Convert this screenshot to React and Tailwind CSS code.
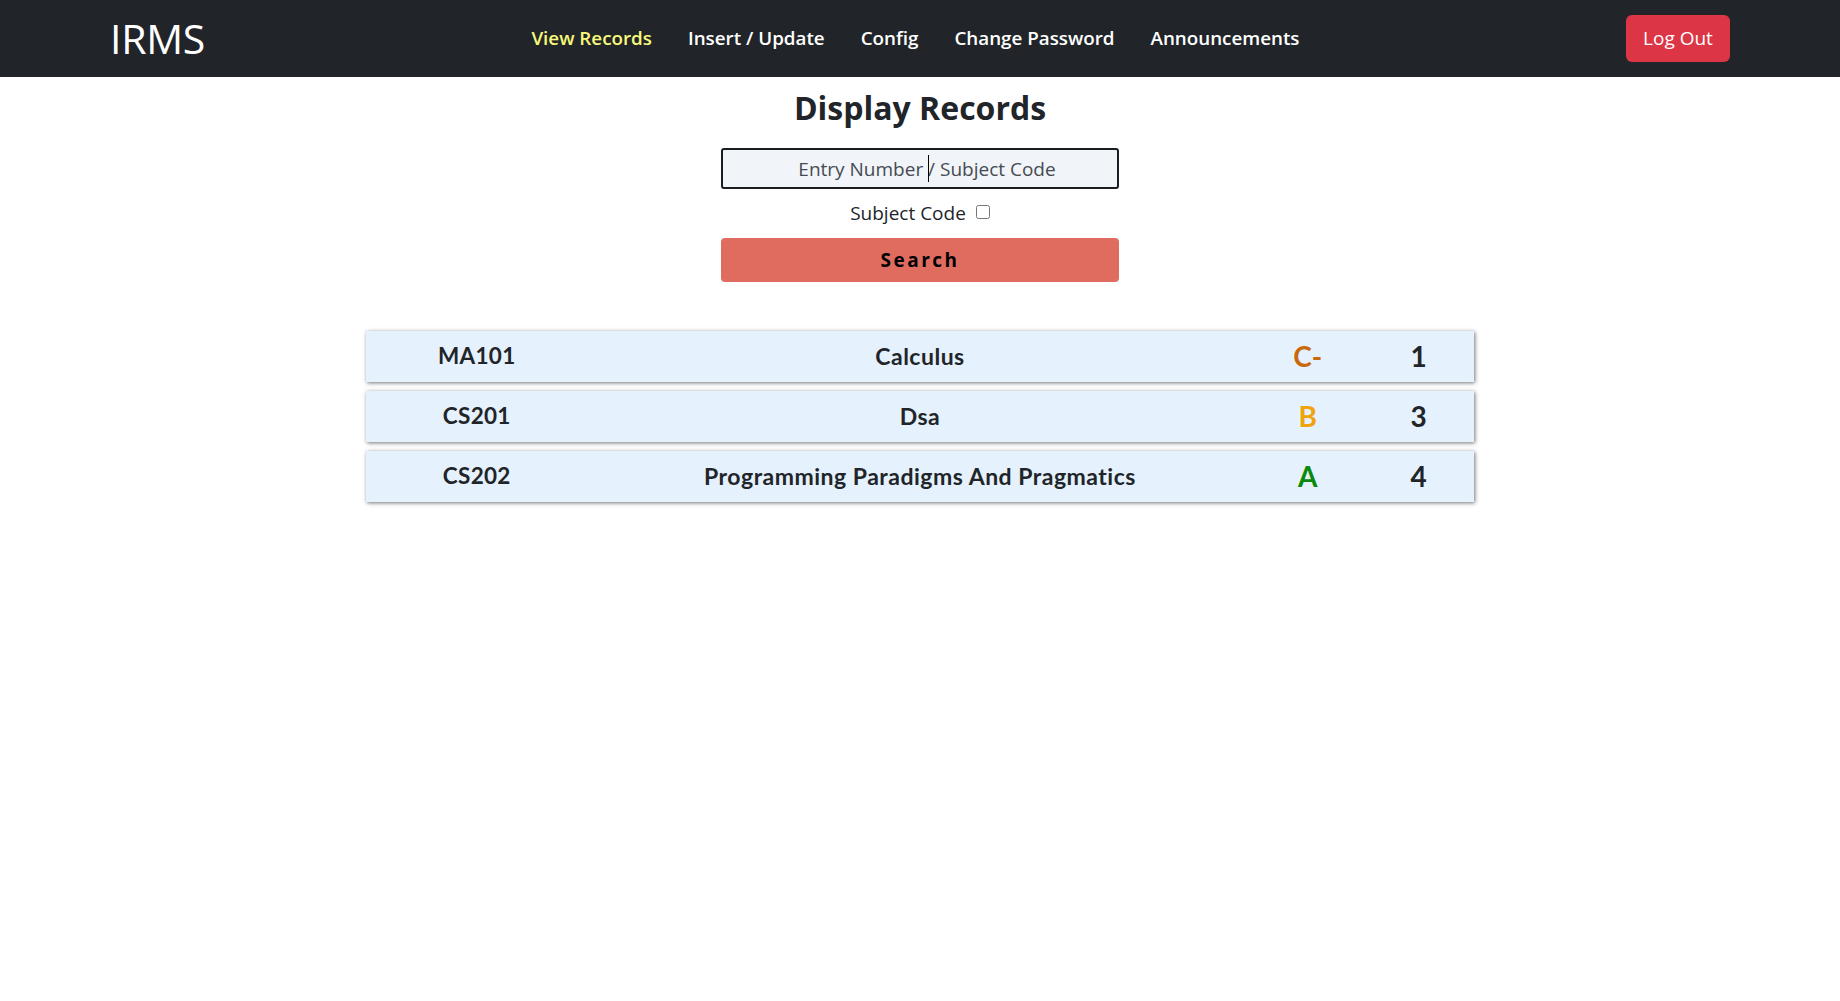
import React, { useState } from "react";

const records = [
  { code: "MA101", name: "Calculus", grade: "C-", credits: 1, color: "text-[#c86a0c]" },
  { code: "CS201", name: "Dsa", grade: "B", credits: 3, color: "text-[#f0a30a]" },
  { code: "CS202", name: "Programming Paradigms And Pragmatics", grade: "A", credits: 4, color: "text-[#0a8a0a]" },
];

const links = ["View Records", "Insert / Update", "Config", "Change Password", "Announcements"];

function App() {
  const [query, setQuery] = useState("");
  const [bySubject, setBySubject] = useState(false);

  return (
    <div className="min-h-screen bg-white font-['Open_Sans',sans-serif] text-[#212529]">
      <nav className="h-[77px] bg-[#212529] flex items-center justify-between px-[110px]">
        <a href="#" className="text-white text-[41px] leading-none tracking-[-0.3px]">
          IRMS
        </a>
        <ul className="flex items-center gap-[36px]">
          {links.map((l, i) => (
            <li key={l}>
              <a
                href="#"
                className={`text-[18.8px] font-semibold ${i === 0 ? "text-[#f8f87a]" : "text-white"}`}
              >
                {l}
              </a>
            </li>
          ))}
        </ul>
        <button className="w-[104px] h-[47px] rounded-[6px] bg-[#dc3545] text-white text-[19px]">
          Log Out
        </button>
      </nav>

      <main className="flex flex-col items-center">
        <h1 className="mt-[12px] text-[32px] leading-[1.2] font-bold text-[#212529]">Display Records</h1>
        <div className="relative mt-[21px]">
          <input
            value={query}
            onChange={(e) => setQuery(e.target.value)}
            placeholder="Entry Number / Subject Code"
            className="w-[398px] h-[41px] border-2 border-[#1b1e21] rounded-[3px] bg-[#f1f4f8] pl-[14px] text-center text-[19px] outline-none placeholder:text-[#454b51]"
          />
          <span className="absolute left-[207px] top-[7px] w-px h-[27px] bg-black"></span>
        </div>
        <label className="mt-[10px] flex items-center gap-[10px] text-[19px] leading-[28px]">
          Subject Code
          <input
            type="checkbox"
            checked={bySubject}
            onChange={(e) => setBySubject(e.target.checked)}
            className="w-[14px] h-[14px] mb-[3px]"
          />
        </label>
        <button className="mt-[11px] w-[398px] h-[44px] rounded-[4px] bg-[#e06c60] text-black text-[19px] font-bold tracking-[2.5px]">
          Search
        </button>

        <div className="mt-[49px] w-[1108px] flex flex-col gap-[9px] font-['Lato',sans-serif]">
          {records.map((r) => (
            <div
              key={r.code}
              className="h-[51px] pb-[2px] bg-[#e5f1fc] grid grid-cols-[20%_60%_10%_10%] items-center text-center shadow-[1px_1px_4px_rgba(0,0,0,0.55)]"
            >
              <span className="text-[22.5px] font-bold tracking-[0.3px]">{r.code}</span>
              <span className="text-[23px] font-bold tracking-[0.5px]">{r.name}</span>
              <span className={`text-[28px] font-bold ${r.color}`}>{r.grade}</span>
              <span className="text-[28px] font-bold">{r.credits}</span>
            </div>
          ))}
        </div>
      </main>
    </div>
  );
}

export default App;
